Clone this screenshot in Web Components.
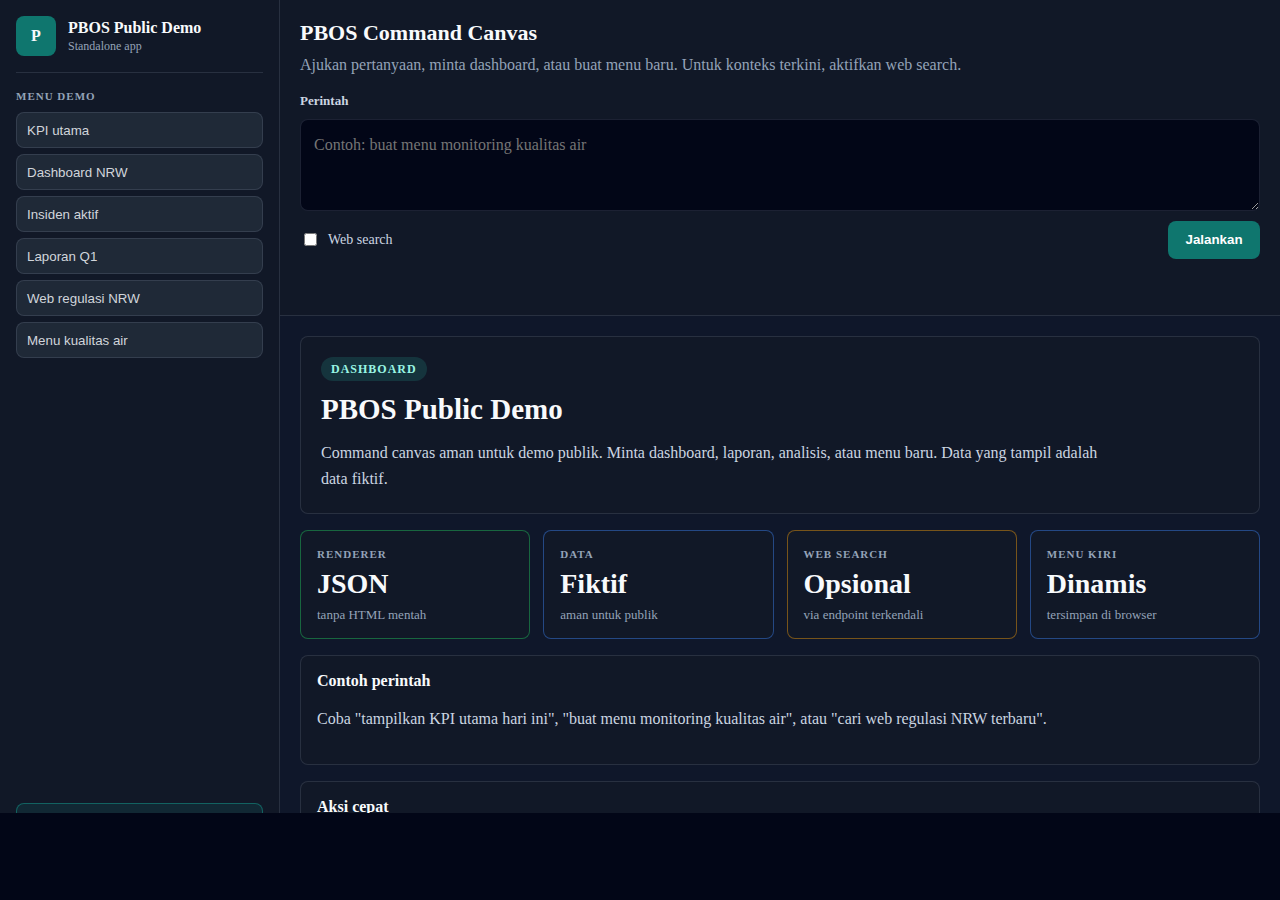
<!DOCTYPE html>
<html lang="id">
<head>
<meta charset="utf-8">
<meta name="viewport" content="width=device-width, initial-scale=1">
<title>PBOS Public Demo</title>
<style>
  :root {
    --page: #020617;
    --canvas: #0f172a;
    --panel: #111827;
    --line: rgba(148, 163, 184, .18);
    --accent: #0f766e;
    --muted: #94a3b8;
    --soft: #cbd5e1;
    --bright: #f8fafc;
  }
  body {
    margin: 0;
    background: var(--page);
    color: var(--bright);
    font-family: "Liberation Serif", "Times New Roman", serif;
    font-size: 16px;
  }
</style>
</head>
<body>
<pbos-app>
  <pbos-sidebar slot="sidebar">
    <pbos-menu-item>KPI utama</pbos-menu-item>
    <pbos-menu-item>Dashboard NRW</pbos-menu-item>
    <pbos-menu-item>Insiden aktif</pbos-menu-item>
    <pbos-menu-item>Laporan Q1</pbos-menu-item>
    <pbos-menu-item>Web regulasi NRW</pbos-menu-item>
    <pbos-menu-item>Menu kualitas air</pbos-menu-item>
  </pbos-sidebar>
  <pbos-command></pbos-command>
  <pbos-canvas>
    <pbos-hero>
      <span slot="badge">Dashboard</span>
      <span slot="title">PBOS Public Demo</span>
      Command canvas aman untuk demo publik. Minta dashboard, laporan, analisis, atau menu baru. Data yang tampil adalah data fiktif.
    </pbos-hero>
    <pbos-stats>
      <pbos-stat tone="good"><span slot="label">Renderer</span>JSON<span slot="note">tanpa HTML mentah</span></pbos-stat>
      <pbos-stat><span slot="label">Data</span>Fiktif<span slot="note">aman untuk publik</span></pbos-stat>
      <pbos-stat tone="warn"><span slot="label">Web search</span>Opsional<span slot="note">via endpoint terkendali</span></pbos-stat>
      <pbos-stat><span slot="label">Menu kiri</span>Dinamis<span slot="note">tersimpan di browser</span></pbos-stat>
    </pbos-stats>
    <pbos-panel>
      <span slot="title">Contoh perintah</span>
      Coba "tampilkan KPI utama hari ini", "buat menu monitoring kualitas air", atau "cari web regulasi NRW terbaru".
    </pbos-panel>
    <pbos-panel>
      <span slot="title">Aksi cepat</span>
    </pbos-panel>
  </pbos-canvas>
</pbos-app>

<script>
  const define = (name, html) => {
    const template = document.createElement('template');
    template.innerHTML = '<style>*{box-sizing:border-box}</style>' + html;
    customElements.define(name, class extends HTMLElement {
      constructor() {
        super();
        this.attachShadow({ mode: 'open' }).append(template.content.cloneNode(true));
      }
    });
  };

  define('pbos-app', `
    <style>
      :host {
        display: grid;
        grid-template-columns: 280px minmax(0, 1fr);
        grid-template-rows: minmax(0, 1fr);
        height: calc(100vh - 87px);
        overflow: hidden;
        background: var(--canvas);
      }
      main { min-width: 0; overflow: hidden; }
    </style>
    <slot name="sidebar"></slot>
    <main><slot></slot></main>
  `);

  define('pbos-sidebar', `
    <style>
      :host {
        box-sizing: border-box;
        display: flex;
        flex-direction: column;
        height: 100vh;
        padding: 16px;
        background: var(--panel);
        border-right: 1px solid var(--line);
      }
      header {
        display: flex;
        align-items: center;
        gap: 12px;
        padding-bottom: 16px;
        border-bottom: 1px solid var(--line);
      }
      .logo {
        display: grid;
        place-items: center;
        width: 40px;
        height: 40px;
        border-radius: 8px;
        background: var(--accent);
        font-weight: bold;
      }
      strong, small { display: block; }
      strong { line-height: 20px; }
      small { font-size: 12px; line-height: 16px; color: var(--muted); }
      h2 {
        margin: 16px 0 9px;
        font-size: 11px;
        line-height: 14px;
        letter-spacing: 1px;
        text-transform: uppercase;
        color: var(--muted);
      }
      nav { display: grid; gap: 6px; }
      aside {
        flex: 0 0 81px;
        margin-top: auto;
        border: 1px solid rgba(20, 184, 166, .4);
        border-radius: 8px;
        background: rgba(20, 184, 166, .1);
      }
    </style>
    <header>
      <span class="logo">P</span>
      <div><strong>PBOS Public Demo</strong><small>Standalone app</small></div>
    </header>
    <h2>Menu demo</h2>
    <nav><slot></slot></nav>
    <aside></aside>
  `);

  define('pbos-menu-item', `
    <style>
      :host { display: block; }
      button {
        display: block;
        width: 100%;
        height: 36px;
        padding: 0 10px;
        border: 1px solid var(--line);
        border-radius: 8px;
        background: #1f2937;
        color: #d1d5db;
        font-family: "Liberation Sans", Arial, sans-serif;
        text-align: left;
      }
    </style>
    <button type="button"><slot></slot></button>
  `);

  define('pbos-command', `
    <style>
      :host {
        display: block;
        padding: 20px;
        background: var(--panel);
        border-bottom: 1px solid var(--line);
      }
      h1 { margin: 0; font-size: 22px; line-height: 26px; }
      p { margin: 6px 0 13px; line-height: 26px; color: var(--muted); }
      .field { display: block; margin-bottom: 8px; font-size: 13px; font-weight: bold; line-height: 20px; color: var(--soft); }
      textarea {
        display: block;
        width: 100%;
        height: 92px;
        padding: 13px;
        border: 1px solid var(--line);
        border-radius: 8px;
        background: var(--page);
        color: var(--bright);
        font-family: inherit;
        font-size: 16px;
        line-height: 24px;
        resize: vertical;
      }
      textarea::placeholder { color: #757575; }
      .row { display: flex; align-items: center; justify-content: space-between; margin-top: 10px; }
      .check { display: flex; align-items: center; gap: 8px; font-size: 14px; line-height: 18px; color: var(--soft); }
      .check input { margin: 2px 3px 4px 4px; }
      button {
        min-width: 92px;
        height: 38px;
        padding: 0 16px 1px;
        border: 0;
        border-radius: 8px;
        background: var(--accent);
        color: #fff;
        font-family: "Liberation Sans", Arial, sans-serif;
        font-weight: bold;
      }
      output { display: block; min-height: 20px; margin-top: 16px; }
    </style>
    <h1>PBOS Command Canvas</h1>
    <p>Ajukan pertanyaan, minta dashboard, atau buat menu baru. Untuk konteks terkini, aktifkan web search.</p>
    <label class="field" for="prompt">Perintah</label>
    <textarea id="prompt" placeholder="Contoh: buat menu monitoring kualitas air"></textarea>
    <div class="row">
      <label class="check"><input type="checkbox">Web search</label>
      <button type="button">Jalankan</button>
    </div>
    <output></output>
  `);

  define('pbos-canvas', `
    <style>
      :host { display: grid; gap: 16px; padding: 20px; }
    </style>
    <slot></slot>
  `);

  define('pbos-hero', `
    <style>
      :host {
        display: block;
        padding: 20px 20px 21px;
        border: 1px solid var(--line);
        border-radius: 8px;
        background: var(--panel);
      }
      .badge {
        display: block;
        width: fit-content;
        padding: 0 10px;
        border-radius: 12px;
        background: rgba(45, 212, 191, .15);
        color: #99f6e4;
        font-size: 12px;
        font-weight: bold;
        line-height: 24px;
        letter-spacing: 1px;
        text-transform: uppercase;
      }
      h2 { margin: 12px 0 15px; font-size: 29px; line-height: 32px; }
      p { max-width: 780px; margin: 0; line-height: 26px; color: var(--soft); }
    </style>
    <span class="badge"><slot name="badge"></slot></span>
    <h2><slot name="title"></slot></h2>
    <p><slot></slot></p>
  `);

  define('pbos-stats', `
    <style>
      :host { display: grid; grid-template-columns: repeat(4, minmax(0, 1fr)); gap: 13px; }
    </style>
    <slot></slot>
  `);

  define('pbos-stat', `
    <style>
      :host {
        display: block;
        padding: 16px 16px 15px;
        border: 1px solid rgba(59, 130, 246, .45);
        border-radius: 8px;
        background: var(--panel);
      }
      :host([tone="good"]) { border-color: rgba(34, 197, 94, .45); }
      :host([tone="warn"]) { border-color: rgba(245, 158, 11, .45); }
      .label {
        font-size: 11px;
        font-weight: bold;
        line-height: 14px;
        letter-spacing: 1px;
        text-transform: uppercase;
        color: var(--muted);
      }
      .value { margin: 7px 0; font-size: 28px; font-weight: bold; line-height: 32px; }
      .note { font-size: 13px; line-height: 16px; color: var(--muted); }
    </style>
    <div class="label"><slot name="label"></slot></div>
    <div class="value"><slot></slot></div>
    <div class="note"><slot name="note"></slot></div>
  `);

  define('pbos-panel', `
    <style>
      :host {
        display: block;
        padding: 16px;
        border: 1px solid var(--line);
        border-radius: 8px;
        background: var(--panel);
      }
      h3 { margin: 0; font-size: 16px; line-height: 18px; }
      p { margin: 16px 0; line-height: 26px; color: var(--soft); }
    </style>
    <h3><slot name="title"></slot></h3>
    <p><slot></slot></p>
  `);
</script>
</body>
</html>
